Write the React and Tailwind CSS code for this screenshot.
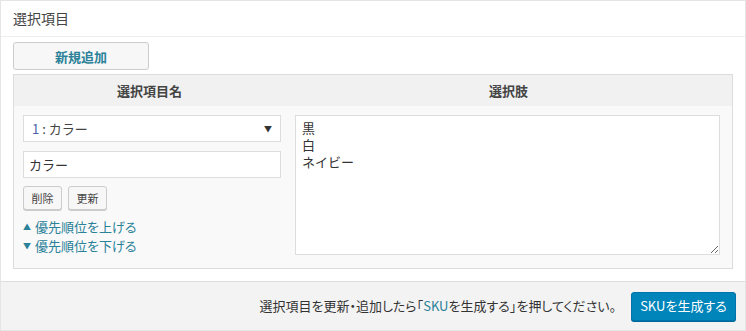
import React from "react";

export default function App() {
  const font = { fontFamily: '"Noto Sans CJK JP", "Noto Sans", sans-serif' };

  return (
    <div
      className="w-[746px] h-[331px] bg-white border border-[#e5e5e5] flex flex-col text-[13px] text-[#333] overflow-hidden"
      style={font}
    >
      <div className="h-[36px] shrink-0 flex items-center px-[12px] border-b border-[#eeeeee] text-[14px] text-[#444]">
        選択項目
      </div>

      <div className="px-[12px] pt-[5px] pb-[12px]">
        <button className="w-[136px] h-[28px] bg-[#f7f7f7] border border-[#cccccc] rounded-[3px] text-[13px] font-bold text-[#2a8198] leading-none">
          新規追加
        </button>

        <div className="mt-[4px] border border-[#dcdcdc] bg-[#f9f9f9]">
          <div className="grid grid-cols-[271px_1fr] h-[31px] bg-[#f1f1f1] font-bold text-[#444]">
            <div className="flex items-center justify-center">選択項目名</div>
            <div className="flex items-center justify-center">選択肢</div>
          </div>

          <div className="grid grid-cols-[271px_1fr] pt-[9px] pb-[13px]">
            <div className="pl-[9px] pr-[4px] flex flex-col">
              <div className="h-[27px] bg-white border border-[#dddddd] flex items-center justify-between pl-[8px] pr-[8px]">
                <span>
                  <span className="text-[#4a5fa8]">1</span>
                  <span className="text-[#444]"> : カラー</span>
                </span>
                <span className="text-[8px] text-[#333]">▼</span>
              </div>
              <input
                className="mt-[9px] h-[27px] bg-white border border-[#dddddd] px-[5px] text-[13px] text-[#333] outline-none"
                defaultValue="カラー"
                style={font}
              />
              <div className="mt-[8px] flex gap-[6px]">
                <button className="w-[39px] h-[24px] bg-[#f7f7f7] border border-[#cccccc] rounded-[3px] shadow-[0_1px_0_#cccccc] text-[11px] text-[#444]">
                  削除
                </button>
                <button className="w-[39px] h-[24px] bg-[#f7f7f7] border border-[#cccccc] rounded-[3px] shadow-[0_1px_0_#cccccc] text-[11px] text-[#444]">
                  更新
                </button>
              </div>
              <div className="mt-[7px] flex flex-col text-[#2a8198] leading-[19px] [font-feature-settings:'palt']">
                <div className="flex items-center">
                  <span className="text-[8px] w-[12px]">▲</span>
                  <span>優先順位を上げる</span>
                </div>
                <div className="flex items-center">
                  <span className="text-[8px] w-[12px]">▼</span>
                  <span>優先順位を下げる</span>
                </div>
              </div>
            </div>

            <div className="pl-[10px] pr-[12px]">
              <textarea
                className="w-full h-[140px] block bg-white border border-[#dddddd] px-[6px] py-[3px] text-[13px] leading-[17px] text-[#333] outline-none"
                defaultValue={"黒\n白\nネイビー"}
                style={font}
              />
            </div>
          </div>
        </div>
      </div>

      <div className="flex-1 bg-[#f3f3f3] border-t border-[#dddddd] flex items-center justify-end pr-[9px] gap-[15px]">
        <span className="text-[#333] [font-feature-settings:'palt']">
          選択項目を更新・追加したら「<span className="text-[#2a8198]">SKU</span>を生成する」を押してください。
        </span>
        <button className="w-[105px] h-[29px] bg-[#0085ba] border border-[#0073aa] rounded-[3px] shadow-[0_1px_0_#006799] text-white text-[13px] [font-feature-settings:'palt']">
          SKUを生成する
        </button>
      </div>
    </div>
  );
}
